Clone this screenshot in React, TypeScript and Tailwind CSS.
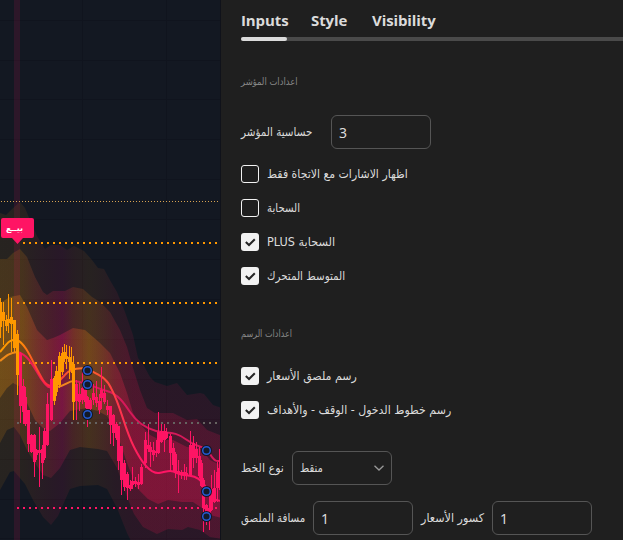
import React from "react";

type Pt = [number, number];
type Candle = [number, number, number, number, number];

const ORANGE = "#ff9800";
const PINK = "#ff1464";

const upper: Pt[][] = [
  [[0,213],[6,215],[12,209],[20,202],[25,208],[30,220],[37,236],[45,249],[51,245],[60,245],[67,250],[74,246],[84,251],[92,260],[98,268],[104,269],[111,282],[117,292],[125,312],[133,335],[138,358],[144,366],[150,377],[155,382],[167,386],[177,383],[187,395],[200,393],[204,394],[213,405],[222,408]],
  [[0,259],[7,259],[13,253],[20,249],[27,257],[35,277],[43,292],[47,295],[53,291],[65,291],[73,287],[83,289],[92,297],[100,302],[110,312],[120,330],[127,347],[133,368],[140,390],[147,408],[155,413],[173,413],[187,420],[197,419],[207,430],[222,436]],
  [[0,303],[10,297],[20,295],[27,307],[37,330],[47,340],[53,338],[60,335],[73,328],[85,330],[100,343],[110,353],[120,373],[127,393],[133,413],[140,424],[150,435],[160,440],[173,440],[187,447],[200,448],[210,460],[222,466]],
];
const lower: Pt[][] = [
  [[0,490],[10,472],[14,471],[25,484],[33,500],[43,517],[51,525],[58,516],[70,489],[80,486],[98,485],[107,489],[117,508],[127,533],[133,545],[222,545]],
  [[0,443],[7,430],[14,427],[20,435],[27,450],[33,460],[43,475],[51,478],[60,468],[70,450],[80,447],[98,449],[107,451],[117,468],[127,497],[134,514],[143,527],[157,534],[168,529],[182,530],[188,527],[200,530],[210,537],[222,539]],
  [[0,398],[7,388],[13,383],[19,386],[27,403],[35,420],[43,428],[50,431],[60,423],[70,411],[87,408],[98,411],[107,416],[117,433],[127,463],[137,488],[148,499],[158,504],[168,500],[182,502],[193,502],[202,508],[210,515],[222,518]],
];

function bandPath(i: number) {
  return "M" + [...upper[i], ...[...lower[i]].reverse()].map((p) => p.join(" ")).join("L") + "Z";
}

// x, high, body top, body bottom, low
const orangeCandles: Candle[] = [
  [-1,298,302,327,338],[2,302,312,321,345],[5,315,320,326,331],[7,294,319,323,333],[10,298,317,324,352],
  [13,320,320,348,352],[16,330,334,375,395],
  [53,376,378,401,405],[55,366,371,392,396],[58,352,356,385,388],[61,347,353,372,375],[63,344,352,359,362],[65,345,356,359,369],[68,346,357,362,379],[70,347,362,370,373],[72,356,364,402,420],
];
const pinkCandles: Candle[] = [
  [19,352,353,406,423],[22,379,386,412,424],[24,387,397,424,426],[27,410,410,444,452],[30,434,435,452,453],[33,434,435,462,477],[35,449,450,455,460],[38,427,450,453,487],[41,445,449,463,479],[43,428,431,458,460],[46,393,404,445,446],[50,360,379,420,421],
  [75,380,384,401,420],[78,383,394,402,411],[81,372,388,400,404],[84,386,390,402,408],[86,396,397,409,427],[89,398,400,409,415],[92,384,393,400,405],[95,381,397,403,407],[98,394,401,410,414],[100,367,390,398,409],[103,385,393,402,404],[106,400,406,410,415],
  [109,406,406,425,444],[112,414,415,433,446],[115,422,424,438,440],[117,426,426,461,470],[120,446,446,480,495],[123,460,463,487,491],[126,472,474,488,500],[129,480,485,489,491],[131,467,481,485,489],[134,477,481,484,487],[137,474,482,485,489],[140,464,467,484,485],[144,432,440,463,468],[147,424,445,449,452],[149,442,447,452,467],[152,442,450,455,461],[155,440,451,453,457],[157,412,432,453,454],[160,424,431,442,443],[163,424,431,440,452],[165,428,432,438,439],[169,434,436,453,470],[172,443,448,465,471],[174,452,454,472,478],[177,460,471,474,493],[180,470,472,475,479],[183,464,472,474,480],[185,467,473,476,480],[189,431,445,475,476],[192,436,443,458,468],[195,442,449,458,463],[198,447,456,476,478],[200,460,463,486,487],[202,478,480,508,532],[205,504,505,513,525],[208,490,508,514,530],[210,475,489,510,511],[213,470,488,502,503],[216,462,472,488,502],[218,449,468,484,490],[220,438,463,484,486],
];

function Candles({ data, color }: { data: Candle[]; color: string }) {
  return (
    <g fill={color} shapeRendering="crispEdges">
      {data.map(([x, h, t, b, l], i) => (
        <g key={i}>
          <rect x={x + 1} y={h} width={1} height={l - h} />
          <rect x={x} y={t} width={3} height={b - t} />
        </g>
      ))}
    </g>
  );
}

function Dots({ y, x, color }: { y: number; x: number; color: string }) {
  return <line x1={x} x2={219} y1={y} y2={y} stroke={color} strokeWidth={2} strokeDasharray="2 4" shapeRendering="crispEdges" />;
}

function Chart() {
  const gridY = [20, 60, 99, 139, 179, 219, 259, 299, 339, 379, 419, 459, 499, 538];
  const anchors: Pt[] = [[87.5,370.5],[87.5,384.5],[87.5,414.5],[206.5,450.5],[206.5,491.5],[206.5,516.5]];
  return (
    <svg width={221} height={540} viewBox="0 0 221 540" className="block shrink-0 bg-[#131822]">
      <defs>
        <linearGradient id="heat" gradientUnits="userSpaceOnUse" x1="0" x2="222" y1="0" y2="0">
          <stop offset="0" stopColor="#dc8a10" />
          <stop offset=".1" stopColor="#dc8010" />
          <stop offset=".16" stopColor="#df5530" />
          <stop offset=".24" stopColor="#e3274c" />
          <stop offset=".28" stopColor="#e91464" />
          <stop offset=".33" stopColor="#de4a30" />
          <stop offset=".4" stopColor="#d97a14" />
          <stop offset=".46" stopColor="#d45c28" />
          <stop offset=".52" stopColor="#e03040" />
          <stop offset=".6" stopColor="#f5144e" />
          <stop offset="1" stopColor="#f51458" />
        </linearGradient>
        <linearGradient id="fast" gradientUnits="userSpaceOnUse" x1="0" x2="222" y1="0" y2="0">
          <stop offset=".08" stopColor="#ff9800" />
          <stop offset=".2" stopColor="#ff293f" />
          <stop offset=".25" stopColor="#ff293f" />
          <stop offset=".34" stopColor="#ff7a20" />
          <stop offset=".4" stopColor="#ff6028" />
          <stop offset=".52" stopColor="#ff3b48" />
          <stop offset=".65" stopColor="#ff1464" />
        </linearGradient>
      </defs>
      <g fill="#10141e" shapeRendering="crispEdges">
        {gridY.map((y) => <rect key={y} x={0} y={y} width={221} height={1} />)}
        <rect x={82} y={0} width={1} height={540} />
        <rect x={166} y={0} width={1} height={540} />
      </g>
      <path d={bandPath(0)} fill="url(#heat)" opacity={0.1} />
      <path d={bandPath(1)} fill="url(#heat)" opacity={0.17} />
      <path d={bandPath(2)} fill="url(#heat)" opacity={0.29} />
      <rect x={14} y={0} width={6} height={540} fill="#e0145a" opacity={0.13} />
      <line x1={1} x2={221} y1={201.5} y2={201.5} stroke="#d8a352" strokeDasharray="1 2" shapeRendering="crispEdges" />
      <Dots x={23} y={243} color={ORANGE} />
      <Dots x={17} y={303} color={ORANGE} />
      <Dots x={23} y={363} color={ORANGE} />
      <Dots x={17} y={423} color="#666361" />
      <Dots x={17} y={508} color={PINK} />
      <g fill="none" strokeWidth={2}>
        <path d="M0 361C6 356 9 353 17 352" stroke="#f08a18" />
        <path d="M17 352C29 354 35 370 42 380S50 387 57 387" stroke="#ec1c55" />
        <path d="M57 387C65 386 68 381 74 381" stroke="#f08620" />
        <path d="M74 381C88 383 96 388 107 391S124 403 130 412S145 428 156 431S174 430 187 440S204 444 210 454S218 460 222 461" stroke="#d6195a" />
        <path d="M0 352C6 345 10 338 17 340C27 344 34 366 43 380C51 392 57 383 64 376C71 367 79 369 87 368C96 375 106 375 112 390C121 407 124 427 134 447C142 463 150 474 159 473C167 472 169 469 177 473S194 473 202 482S210 501 222 501" stroke="url(#fast)" />
      </g>
      <Candles data={orangeCandles} color={ORANGE} />
      <Candles data={pinkCandles} color={PINK} />
      <path d="M3 218H32Q34 218 34 220V236Q34 238 32 238H23L17.500 244L12 238H3Q1 238 1 236V220Q1 218 3 218Z" fill={PINK} />
      <text x={14.5} y={231} textAnchor="middle" fill="#fff" className="font-['DejaVu_Sans',sans-serif] text-[8px] font-bold">بيــع</text>
      {anchors.map(([x, y], i) => (
        <g key={i}>
          <circle cx={x} cy={y} r={5.5} fill="#131822" />
          <circle cx={x} cy={y} r={3.8} fill="#131a28" stroke="#2459d0" strokeWidth={1.5} />
        </g>
      ))}
      <rect x={220} y={0} width={1} height={540} fill="#10121a" />
    </svg>
  );
}

function Check({ label, fit, on }: { label: string; fit: string; on?: boolean }) {
  return (
    <label className="flex h-[34px] items-center gap-2 whitespace-nowrap">
      <span className={on ? "flex size-[18px] items-center justify-center rounded-[3px] bg-[#f2f2f2]" : "size-[18px] rounded-[3px] border border-[#f2f2f2]"}>
        {on && (
          <svg width={18} height={18} viewBox="0 0 18 18" fill="none" stroke="#252525" strokeWidth={2}>
            <path d="M4.800 9L8 12L13.800 6.200" />
          </svg>
        )}
      </span>
      <span className={fit}>{label}</span>
    </label>
  );
}

function Field({ value }: { value: string }) {
  return <div className="flex h-[34px] w-[100px] shrink-0 items-center rounded-md border border-[#555] pl-[7px] font-['Noto_Sans',sans-serif] text-[14px]">{value}</div>;
}

export default function App() {
  return (
    <div className="flex h-[540px] w-[623px] overflow-hidden bg-[#1f1f1f]">
      <Chart />
      <main className="flex min-w-0 flex-1 flex-col pl-5 font-['DejaVu_Sans',sans-serif] text-[12px] text-[#dbdbdb]">
        <nav className="flex h-[37px] shrink-0 gap-6 pt-2 font-['Open_Sans',sans-serif] text-[15px] leading-6 font-bold tracking-[-0.1px]">
          <span className="w-[46px]">Inputs</span>
          <span className="w-[37px]">Style</span>
          <span className="w-[64px]">Visibility</span>
        </nav>
        <div className="h-1 shrink-0 rounded-l-full bg-[#4a4a4a]">
          <div className="h-1 w-[46px] rounded-full bg-[#dbdbdb]" />
        </div>
        <h2 className="flex h-[74px] shrink-0 items-center pt-[6px] text-[10px] text-[#868686]"><span className="origin-left scale-x-[0.84]">اعدادات المؤشر</span></h2>
        <div className="flex h-[34px] shrink-0 items-center">
          <div className="w-[90px] whitespace-nowrap"><span className="inline-block origin-left scale-x-[0.865]">حساسية المؤشر</span></div>
          <Field value="3" />
        </div>
        <section className="mt-2 shrink-0">
          <Check label="اظهار الاشارات مع الاتجاة فقط" fit="origin-left scale-x-[0.91]" />
          <Check label="السحابة" fit="origin-left scale-x-[0.85]" />
          <Check label="PLUS السحابة" fit="origin-left scale-x-[0.94]" on />
          <Check label="المتوسط المتحرك" fit="origin-left scale-x-[0.86]" on />
        </section>
        <h2 className="flex h-[66px] shrink-0 items-center pt-[14px] text-[10px] text-[#868686]"><span className="origin-left scale-x-[0.81]">اعدادات الرسم</span></h2>
        <section className="shrink-0">
          <Check label="رسم ملصق الأسعار" fit="origin-left scale-x-[0.92]" on />
          <Check label="رسم خطوط الدخول - الوقف - والأهداف" fit="origin-left scale-x-[0.915]" on />
        </section>
        <div className="mt-6 flex h-[34px] shrink-0 items-center whitespace-nowrap">
          <div className="w-[51px]"><span className="inline-block origin-left scale-x-[0.92]">نوع الخط</span></div>
          <div className="flex h-[34px] w-[100px] items-center justify-between rounded-md border border-[#555] pr-[7px] pl-[7px]">
            <span className="origin-left scale-x-[0.83]">منقط</span>
            <svg width={10} height={6} viewBox="0 0 10 6" fill="none" stroke="#999" strokeWidth={1.3}><path d="M.5 .8L5 5L9.500 .8" /></svg>
          </div>
        </div>
        <div className="mt-4 flex h-[34px] shrink-0 items-center whitespace-nowrap">
          <div className="w-[72px] shrink-0"><span className="inline-block origin-left scale-x-[0.855]">مسافة الملصق</span></div>
          <Field value="1" />
          <div className="ml-2 w-[71px] shrink-0"><span className="inline-block origin-left scale-x-[0.93]">كسور الأسعار</span></div>
          <Field value="1" />
        </div>
      </main>
    </div>
  );
}
